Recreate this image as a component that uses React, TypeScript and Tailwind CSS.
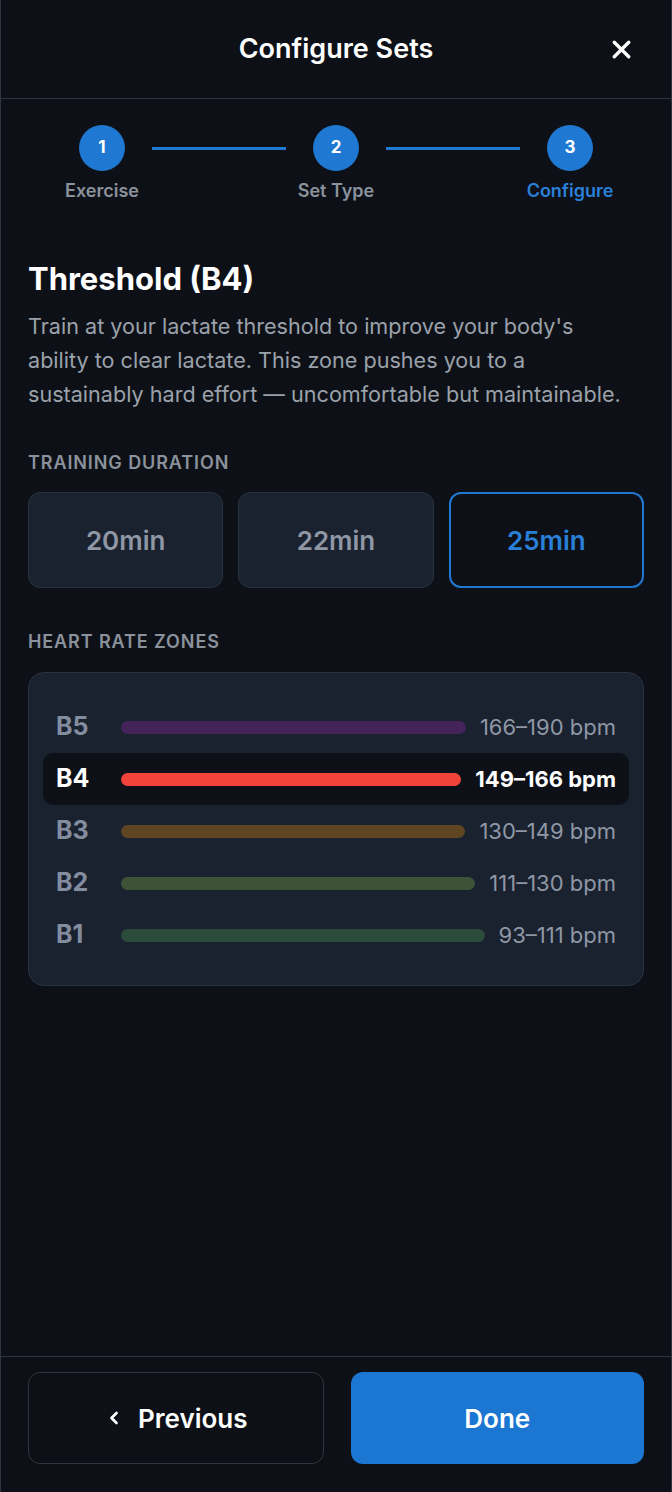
import { X, ChevronLeft } from "lucide-react"

const steps = [
  { n: 1, label: "Exercise", active: false },
  { n: 2, label: "Set Type", active: false },
  { n: 3, label: "Configure", active: true },
]

const durations = [
  { label: "20min", selected: false },
  { label: "22min", selected: false },
  { label: "25min", selected: true },
]

const zones = [
  { id: "B5", range: "166–190 bpm", bar: "bg-[#43235a]", current: false },
  { id: "B4", range: "149–166 bpm", bar: "bg-[#f2433a]", current: true },
  { id: "B3", range: "130–149 bpm", bar: "bg-[#5f4522]", current: false },
  { id: "B2", range: "111–130 bpm", bar: "bg-[#3e5238]", current: false },
  { id: "B1", range: "93–111 bpm", bar: "bg-[#2b4c3a]", current: false },
]

export default function App() {
  return (
    <div
      className="flex flex-col h-[1492px] w-[672px] bg-[#0d1117] border-x border-[#30363d] text-white"
      style={{ fontFamily: "Inter, 'Noto Sans', sans-serif" }}
    >
      {/* header */}
      <div className="relative flex h-[99px] shrink-0 items-center justify-center border-b border-[#30363d]">
        <h1 className="text-[27px] font-semibold">Configure Sets</h1>
        <button className="absolute right-[35px] top-[35px] text-white">
          <X className="h-[29px] w-[29px]" strokeWidth={2.8} />
        </button>
      </div>

      {/* body */}
      <div className="flex-1 px-[27px] pt-[26px]">
        {/* stepper */}
        <div className="flex">
          {steps.map((s, i) => (
            <div key={s.n} className="contents">
              {i > 0 && (
                <div className="-mx-[24px] mt-[22px] h-[3px] flex-1 bg-[#1f78d1]" />
              )}
              <div className="flex w-[148px] flex-col items-center">
                <div className="flex h-[46px] w-[46px] items-center justify-center rounded-full bg-[#1f78d1] text-[17px] font-bold">
                  {s.n}
                </div>
                <span
                  className={
                    "mt-[8px] text-[18px] leading-[24px] font-semibold " +
                    (s.active ? "text-[#2a80d8]" : "text-[#8b929c]")
                  }
                >
                  {s.label}
                </span>
              </div>
            </div>
          ))}
        </div>

        {/* zone info */}
        <h2 className="mt-[58px] text-[31px] leading-[36px] font-bold">Threshold (B4)</h2>
        <p className="mt-[12px] text-[21.6px] leading-[34px] text-[#9ba1aa]">
          Train at your lactate threshold to improve your body's
          <br />
          ability to clear lactate. This zone pushes you to a
          <br />
          sustainably hard effort — uncomfortable but maintainable.
        </p>

        {/* duration */}
        <div className="mt-[40px] text-[18px] leading-[24px] font-semibold uppercase tracking-[0.9px] text-[#8b929c]">
          Training Duration
        </div>
        <div className="mt-[17px] grid grid-cols-3 gap-[15px]">
          {durations.map((d) => (
            <button
              key={d.label}
              className={
                "flex h-[96px] items-center justify-center rounded-[12px] text-[26px] font-semibold " +
                (d.selected
                  ? "border-2 border-[#1f78d1] bg-[#0d1117] text-[#2a80d8]"
                  : "border border-[#2a3140] bg-[#1a2230] text-[#8f97a5]")
              }
            >
              {d.label}
            </button>
          ))}
        </div>

        {/* heart rate zones */}
        <div className="mt-[42px] text-[18px] leading-[24px] font-semibold uppercase tracking-[0.9px] text-[#8b929c]">
          Heart Rate Zones
        </div>
        <div className="mt-[18px] rounded-[16px] border border-[#2a3140] bg-[#1a2230] px-[14px] pt-[28px] pb-[24px]">
          {zones.map((z) => (
            <div
              key={z.id}
              className={
                "flex h-[52px] items-center gap-[14px] rounded-[10px] px-[13px] " +
                (z.current ? "bg-[#0d1117]" : "")
              }
            >
              <span
                className={
                  "w-[51px] shrink-0 text-[25px] font-bold " + (z.current ? "text-white" : "text-[#848da0]")
                }
              >
                {z.id}
              </span>
              <div className={"h-[13px] flex-1 rounded-full " + z.bar} />
              <span
                className={
                  "shrink-0 text-[22px] " + (z.current ? "font-bold text-white" : "text-[#8f97a5]")
                }
              >
                {z.range}
              </span>
            </div>
          ))}
        </div>
      </div>

      {/* footer */}
      <div className="flex shrink-0 gap-[27px] border-t border-[#30363d] px-[27px] pt-[15px] pb-[28px]">
        <button className="flex h-[92px] flex-1 items-center justify-center gap-[14px] rounded-[12px] border border-[#30363d] text-[26px] font-semibold">
          <ChevronLeft className="h-[20px] w-[20px]" strokeWidth={3.2} />
          Previous
        </button>
        <button className="flex h-[92px] flex-1 items-center justify-center rounded-[12px] bg-[#1c77d2] text-[26px] font-semibold">
          Done
        </button>
      </div>
    </div>
  )
}
